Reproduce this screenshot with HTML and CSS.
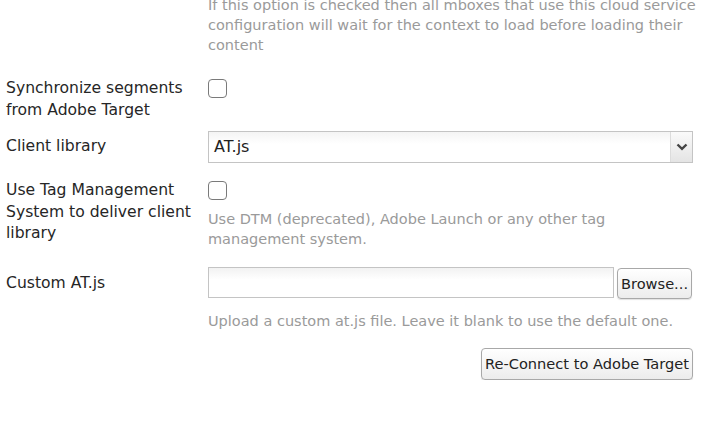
FILE: index.html
```html
<!DOCTYPE html>
<html>
<head>
<meta charset="utf-8">
<link rel="stylesheet" href="styles.css">
</head>
<body>
<div class="form">
  <div class="row row-top">
    <div class="label"></div>
    <div class="field">
      <p class="help help-wide">If this option is checked then all mboxes that use this cloud service configuration will wait for the context to load before loading their content</p>
    </div>
  </div>
  <div class="row row-sync">
    <div class="label">Synchronize segments from Adobe Target</div>
    <div class="field"><span class="checkbox"></span></div>
  </div>
  <div class="row row-client">
    <div class="label">Client library</div>
    <div class="field">
      <div class="select"><span class="select-value">AT.js</span><span class="select-arrow"><svg width="12" height="8" viewBox="0 0 12 8"><path d="M1.5 1.5 L6 5.8 L10.5 1.5" fill="none" stroke="#444" stroke-width="2.4"/></svg></span></div>
    </div>
  </div>
  <div class="row row-tag">
    <div class="label">Use Tag Management System to deliver client library</div>
    <div class="field">
      <span class="checkbox"></span>
      <p class="help help-tag">Use DTM (deprecated), Adobe Launch or any other tag management system.</p>
    </div>
  </div>
  <div class="row row-custom">
    <div class="label">Custom AT.js</div>
    <div class="field">
      <div class="file-row"><span class="text-input"></span><span class="btn btn-browse">Browse...</span></div>
      <p class="help help-upload">Upload a custom at.js file. Leave it blank to use the default one.</p>
    </div>
  </div>
  <div class="actions">
    <span class="btn btn-connect">Re-Connect to Adobe Target</span>
  </div>
</div>
</body>
</html>
```
FILE: styles.css
```css
html, body {
  margin: 0;
  padding: 0;
  background: #ffffff;
}
body {
  font-family: "DejaVu Sans", sans-serif;
  color: #222;
  overflow: hidden;
}
.form {
  padding-left: 6px;
  width: 687px;
  margin-top: -5px;
}
.row {
  display: grid;
  grid-template-columns: 202px 485px;
}
.label {
  font-size: 15.6px;
  line-height: 21.5px;
  color: #262626;
}
.help {
  margin: 0;
  font-size: 14.5px;
  line-height: 20px;
  color: #9a9a9a;
}
.help-wide {
  margin-right: -14px;
}
.row-sync { margin-top: 23px; }
.row-client { margin-top: 10px; }
.row-client .label { padding-top: 5px; }
.row-tag { margin-top: 17px; }
.row-custom { margin-top: 18px; }
.row-custom .label { padding-top: 6px; }
.checkbox {
  display: block;
  width: 17px;
  height: 17px;
  border: 1px solid #7a7a7a;
  border-radius: 4px;
  margin-top: 1px;
  background: #fff;
}
.help-tag { margin-top: 9px; }
.select {
  display: flex;
  height: 30px;
  border: 1px solid #c4c4c4;
  background: linear-gradient(#f4f4f4, #ffffff 40%);
}
.select-value {
  flex: 1;
  font-size: 16px;
  line-height: 30px;
  padding-left: 5px;
  color: #222;
}
.select-arrow {
  width: 22px;
  border-left: 1px solid #dcdcdc;
  background: linear-gradient(#fafafa, #e4e4e4);
  display: flex;
  align-items: flex-start;
  justify-content: center;
  padding-top: 11px;
  box-sizing: border-box;
}
.file-row {
  display: flex;
  align-items: flex-start;
  gap: 3px;
}
.text-input {
  display: block;
  width: 404px;
  height: 29px;
  border: 1px solid #c4c4c4;
  background: linear-gradient(#f2f2f2, #ffffff 40%);
}
.btn {
  display: block;
  box-sizing: border-box;
  border: 1px solid #a8a8a8;
  border-radius: 4px;
  background: linear-gradient(#ffffff, #ececec);
  box-shadow: 0 1px 1px rgba(0,0,0,0.12);
  color: #222;
  text-align: center;
  white-space: nowrap;
}
.btn-browse {
  width: 75px;
  height: 31px;
  line-height: 29px;
  margin-top: 1px;
  font-size: 14.6px;
}
.help-upload { margin-top: 12px; }
.actions {
  display: flex;
  justify-content: flex-end;
  margin-top: 17px;
}
.btn-connect {
  width: 212px;
  height: 32px;
  line-height: 30px;
  font-size: 14.6px;
}
```
